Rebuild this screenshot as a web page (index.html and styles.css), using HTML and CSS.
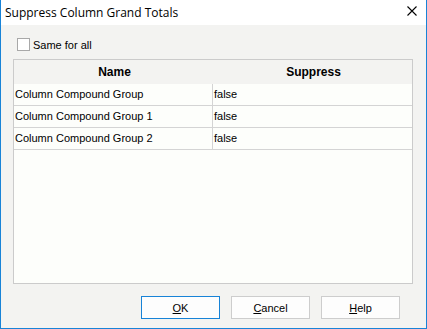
FILE: index.html
```html
<!DOCTYPE html>
<html lang="en">
<head>
  <meta charset="UTF-8">
  <title>Suppress Column Grand Totals</title>
  <link rel="stylesheet" href="styles.css">
</head>
<body>
  <div class="ventana">
    <div class="titulo">
      <span>Suppress Column Grand Totals</span>
      <svg class="cerrar" width="10" height="10" viewBox="0 0 10 10">
        <path d="M0.5 0.5 L9.5 9.5 M9.5 0.5 L0.5 9.5" stroke="#000" stroke-width="1.1"/>
      </svg>
    </div>

    <div class="cuerpo">
      <label class="check">
        <span class="caja"></span>
        Same for all
      </label>

      <div class="grid">
        <div class="fila cabecera">
          <div class="celda">Name</div>
          <div class="celda">Suppress</div>
        </div>
        <div class="fila">
          <div class="celda">Column Compound Group</div>
          <div class="celda">false</div>
        </div>
        <div class="fila">
          <div class="celda">Column Compound Group 1</div>
          <div class="celda">false</div>
        </div>
        <div class="fila">
          <div class="celda">Column Compound Group 2</div>
          <div class="celda">false</div>
        </div>
      </div>

      <div class="botones">
        <button class="boton activo"><u>O</u>K</button>
        <button class="boton"><u>C</u>ancel</button>
        <button class="boton"><u>H</u>elp</button>
      </div>
    </div>
  </div>
</body>
</html>
```

FILE: styles.css
```css
body {
  margin: 0;
  font-family: Tahoma, "Liberation Sans", sans-serif;
  font-size: 11px;
  color: #000;
}

.ventana {
  width: 427px;
  height: 329px;
  box-sizing: border-box;
  border: 1px solid #1883d7;
  border-top: none;
  background: #f3f3f1;
  display: flex;
  flex-direction: column;
}

.titulo {
  height: 25px;
  background: #fff;
  display: flex;
  align-items: center;
  justify-content: space-between;
  padding: 0 9px 0 4px;
  font-family: "Segoe UI", "Open Sans", sans-serif;
  font-size: 12px;
}

.cerrar {
  margin-top: -3px;
}

.cuerpo {
  flex: 1;
  display: flex;
  flex-direction: column;
  padding: 13px 13px 0 12px;
}

.check {
  display: flex;
  align-items: center;
  gap: 3px;
  margin-left: 4px;
  height: 13px;
}

.caja {
  width: 11px;
  height: 11px;
  border: 1px solid #a8a8a8;
  background: #fff;
}

.grid {
  margin-top: 8px;
  width: 398px;
  height: 223px;
  border: 1px solid #cbcbcb;
  background: #fdfefb;
}

.fila {
  display: flex;
  height: 21px;
  line-height: 21px;
  border-bottom: 1px solid #d4d4d4;
}

.fila .celda {
  padding-left: 1px;
  white-space: nowrap;
}

.fila .celda:first-child {
  width: 197px;
  border-right: 1px solid #d4d4d4;
}

.fila .celda:last-child {
  flex: 1;
}

.cabecera {
  height: 24px;
  line-height: 24px;
  border-bottom: none;
  background: #f3f3f1;
  font-weight: bold;
  font-size: 12px;
}

.cabecera .celda {
  text-align: center;
}

.fila.cabecera .celda:first-child {
  border-right: none;
  width: 199px;
}

.botones {
  display: flex;
  justify-content: flex-end;
  gap: 11px;
  margin-top: 12px;
  padding-right: 13px;
}

.boton {
  width: 79px;
  height: 23px;
  border: 1px solid #cdcdcd;
  background: #fdfdfd;
  font-family: Tahoma, "Liberation Sans", sans-serif;
  font-size: 11px;
  color: #000;
  padding: 0;
}

.boton.activo {
  border-color: #1883d7;
}
```
